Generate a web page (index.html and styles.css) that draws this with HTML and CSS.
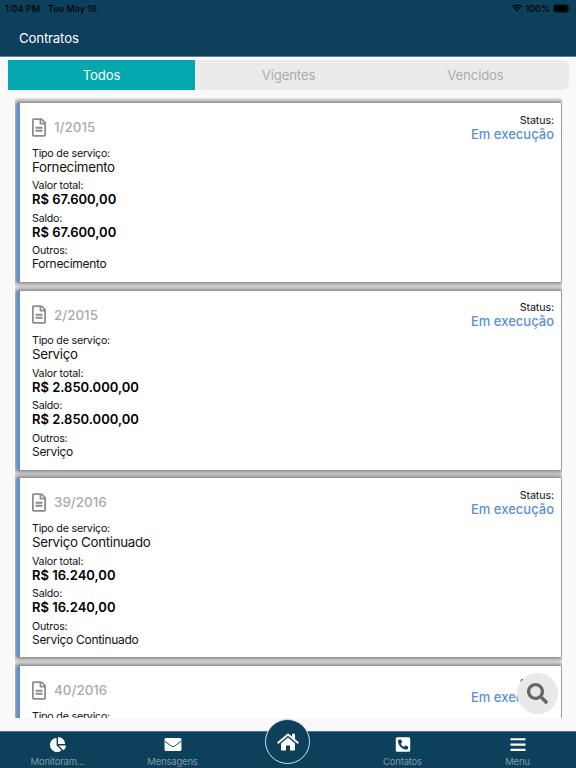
FILE: index.html
```html
<!DOCTYPE html>
<html lang="pt-BR">
<head>
    <meta charset="UTF-8">
    <meta name="viewport" content="width=device-width, initial-scale=1.0">
    <title>Contratos</title>
    <link rel="stylesheet" href="styles.css">
</head>
<body>
    <svg class="sprite" aria-hidden="true">
        <symbol id="icon-file" viewBox="0 0 384 512">
            <path d="M288 248v28c0 6.600-5.400 12-12 12H108c-6.600 0-12-5.400-12-12v-28c0-6.600 5.400-12 12-12h168c6.600 0 12 5.400 12 12zm-12 72H108c-6.600 0-12 5.400-12 12v28c0 6.600 5.400 12 12 12h168c6.600 0 12-5.400 12-12v-28c0-6.600-5.400-12-12-12zm108-188.100V464c0 26.500-21.500 48-48 48H48c-26.500 0-48-21.500-48-48V48C0 21.500 21.500 0 48 0h204.100C264.800 0 277 5.100 286 14.100L369.900 98c9 8.900 14.100 21.200 14.100 33.900zm-128-80V128h76.100L256 51.900zM336 464V176H232c-13.300 0-24-10.700-24-24V48H48v416h288z"/>
        </symbol>
    </svg>

    <header class="header">
        <div class="status-bar">
            <span class="time">1:04 PM</span>
            <span class="date">Tue May 18</span>
            <svg class="wifi" viewBox="0 0 20 15" fill="none" stroke="#000" stroke-width="2.500">
                <path d="M1 5.500a13 13 0 0 1 18 0M4.300 9a8.200 8.200 0 0 1 11.400 0"/>
                <path d="M10 14.500l-3.200-3.300a4.600 4.600 0 0 1 6.400 0z" fill="#000" stroke="none"/>
            </svg>
            <span class="percent">100%</span>
            <svg class="battery" viewBox="0 0 20 10">
                <rect x=".5" y=".5" width="17" height="9" rx="2.500" fill="none" stroke="#06202e"/>
                <rect x="1.300" y="1.300" width="15.400" height="7.400" rx="1.500"/>
                <path d="M18.500 3.500c1.200.4 1.200 2.600 0 3z" fill="#06202e"/>
            </svg>
        </div>
        <h1>Contratos</h1>
    </header>

    <nav class="tabs">
        <a class="tab active">Todos</a>
        <a class="tab">Vigentes</a>
        <a class="tab">Vencidos</a>
    </nav>

    <main class="list">
        <article class="card">
            <div class="card-info">
                <h2><svg class="file"><use href="#icon-file"/></svg>1/2015</h2>
                <p class="label">Tipo de serviço:</p>
                <p class="value">Fornecimento</p>
                <p class="label">Valor total:</p>
                <p class="value money">R$ 67.600,00</p>
                <p class="label">Saldo:</p>
                <p class="value money">R$ 67.600,00</p>
                <p class="label">Outros:</p>
                <p class="value small">Fornecimento</p>
            </div>
            <div class="card-status">
                <p class="label">Status:</p>
                <p class="state">Em execução</p>
            </div>
        </article>

        <article class="card">
            <div class="card-info">
                <h2><svg class="file"><use href="#icon-file"/></svg>2/2015</h2>
                <p class="label">Tipo de serviço:</p>
                <p class="value">Serviço</p>
                <p class="label">Valor total:</p>
                <p class="value money">R$ 2.850.000,00</p>
                <p class="label">Saldo:</p>
                <p class="value money">R$ 2.850.000,00</p>
                <p class="label">Outros:</p>
                <p class="value small">Serviço</p>
            </div>
            <div class="card-status">
                <p class="label">Status:</p>
                <p class="state">Em execução</p>
            </div>
        </article>

        <article class="card">
            <div class="card-info">
                <h2><svg class="file"><use href="#icon-file"/></svg>39/2016</h2>
                <p class="label">Tipo de serviço:</p>
                <p class="value">Serviço Continuado</p>
                <p class="label">Valor total:</p>
                <p class="value money">R$ 16.240,00</p>
                <p class="label">Saldo:</p>
                <p class="value money">R$ 16.240,00</p>
                <p class="label">Outros:</p>
                <p class="value small">Serviço Continuado</p>
            </div>
            <div class="card-status">
                <p class="label">Status:</p>
                <p class="state">Em execução</p>
            </div>
        </article>

        <article class="card">
            <div class="card-info">
                <h2><svg class="file"><use href="#icon-file"/></svg>40/2016</h2>
                <p class="label">Tipo de serviço:</p>
            </div>
            <div class="card-status">
                <p class="label">Status:</p>
                <p class="state">Em execução</p>
            </div>
        </article>
    </main>

    <button class="search" aria-label="Buscar">
        <svg viewBox="0 0 512 512"><path d="M505 442.700L405.300 343c-4.500-4.500-10.600-7-17-7H372c27.600-35.300 44-79.700 44-128C416 93.100 322.900 0 208 0S0 93.100 0 208s93.100 208 208 208c48.300 0 92.700-16.400 128-44v16.300c0 6.400 2.500 12.500 7 17l99.700 99.700c9.400 9.400 24.600 9.400 33.900 0l28.300-28.300c9.400-9.400 9.400-24.600.1-34zM208 336c-70.700 0-128-57.200-128-128 0-70.700 57.200-128 128-128 70.700 0 128 57.200 128 128 0 70.700-57.200 128-128 128z"/></svg>
    </button>

    <footer class="bottom-nav">
        <a class="nav-item">
            <svg viewBox="0 0 544 512"><path d="M527.790 288H290.500l158.030 158.030c6.040 6.040 15.980 6.530 22.190.68 38.700-36.460 65.320-85.610 73.130-140.860 1.340-9.460-6.510-17.850-16.060-17.850zm-15.830-64.800C503.720 103.740 408.260 8.280 288.800.04 279.680-.59 272 7.100 272 16.240V240h223.770c9.140 0 16.820-7.680 16.190-16.800zM224 288V50.710c0-9.550-8.390-17.400-17.840-16.060C86.990 51.490-4.100 155.600.14 280.370 4.500 408.510 114.830 513.590 243.030 511.980c50.400-.63 96.970-16.870 135.260-44.030 7.900-5.600 8.420-17.230 1.570-24.080L224 288z"/></svg>
            <span>Monitoram...</span>
        </a>
        <a class="nav-item">
            <svg viewBox="0 0 18 16">
                <rect y="1" width="18" height="14" rx="1.500"/>
                <path d="M0 4.300l7.300 5.500q1.700 1.200 3.400 0L18 4.300" fill="none" stroke="#0c405b" stroke-width="1"/>
            </svg>
            <span>Mensagens</span>
        </a>
        <a class="nav-item home">
            <span class="home-circle">
                <svg viewBox="0 0 22 18">
                    <path d="M1.200 9.700L11 1.500l9.800 8.200" fill="none" stroke="#fff" stroke-width="2" stroke-linecap="round" stroke-linejoin="round"/>
                    <path d="M15 .8h3v6l-3-2.500zM11 4.600l7 5.900v6.200q0 .8-.8.800H13v-5H9v5H4.800q-.8 0-.8-.8v-6.200z"/>
                </svg>
            </span>
        </a>
        <a class="nav-item">
            <svg viewBox="0 0 16 16">
                <rect x=".3" y=".3" width="15.400" height="15.400" rx="1.600"/>
                <path d="M3.100 3.100l2.300-.6q.4-.1.600.3l1.100 2.500q.1.400-.2.700L5.500 7.100q1.200 2.400 3.500 3.500l1.200-1.400q.3-.3.600-.2l2.500 1.100q.4.200.3.600l-.6 2.300q-.1.400-.6.400C7 13.400 2.600 9 2.600 3.600q0-.4.500-.5z" fill="#0c405b"/>
            </svg>
            <span>Contatos</span>
        </a>
        <a class="nav-item">
            <svg viewBox="0 0 16 16"><path d="M0 1.200h16v2.300H0zM0 6.900h16v2.300H0zM0 12.600h16v2.300H0z"/></svg>
            <span>Menu</span>
        </a>
    </footer>
</body>
</html>
```

FILE: styles.css
```css
* {
    box-sizing: border-box;
}

body {
    font-family: Inter, Roboto, sans-serif;
    background-color: #f9f9f9;
    color: #111111;
    margin: 0;
    height: 768px;
    display: flex;
    flex-direction: column;
    overflow: hidden;
    position: relative;
}

h1, h2, p {
    margin: 0;
    font-weight: 400;
}

.sprite {
    position: absolute;
    width: 0;
    height: 0;
}

.header {
    flex: none;
    height: 57px;
    background-color: #0c405b;
    border-bottom: 1px solid #5f8298;
}

.status-bar {
    height: 16px;
    padding: 0 5px;
    display: flex;
    align-items: center;
    font-size: 9.1px;
    font-weight: 500;
    color: #000000;
}

.date {
    margin-left: 8px;
}

.wifi {
    width: 10px;
    height: 8px;
    margin-left: auto;
}

.percent {
    margin: 0 3px;
}

.battery {
    width: 18px;
    height: 9px;
}

.header h1 {
    padding: 13px 19px 0;
    font-size: 13.2px;
    letter-spacing: -0.15px;
    line-height: 18px;
    color: #ffffff;
}

.tabs {
    flex: none;
    display: flex;
    height: 30px;
    margin: 3px 7px 0 8px;
    background-color: #ebebeb;
    border-radius: 0 7px 7px 0;
}

.tab {
    flex: 1;
    line-height: 31px;
    font-size: 13.2px;
    letter-spacing: -0.15px;
    text-align: center;
    color: #adadad;
}

.tab.active {
    background-color: #04a7ad;
    color: #ffffff;
}

.list {
    flex: none;
    height: 620px;
    margin: 8px 14px 0 15px;
    padding: 5px 0 0 2px;
    overflow: hidden;
}

.card {
    height: 179px;
    margin-bottom: 8.67px;
    margin-right: 1px;
    padding: 9.6px 7px 0 12px;
    display: flex;
    justify-content: space-between;
    background-color: #ffffff;
    border-left: 3px solid #5b8fd9;
    box-shadow: 0 0 5px 2px rgba(0, 0, 0, 0.55);
}

.card h2 {
    display: flex;
    align-items: center;
    height: 29px;
    margin-bottom: 4px;
    font-size: 13.4px;
    font-weight: 500;
    color: #aaaaaa;
}

.file {
    width: 14px;
    height: 19px;
    margin-right: 8px;
    fill: #8c8c8c;
}

.label {
    font-size: 10.7px;
    letter-spacing: -0.22px;
    line-height: 15px;
}

.value {
    height: 17.6px;
    font-size: 13.3px;
    letter-spacing: -0.3px;
    line-height: 13px;
}

.money {
    font-size: 13px;
    letter-spacing: 0;
    font-weight: 600;
    color: #000000;
}

.small {
    font-size: 12px;
    letter-spacing: -0.3px;
    line-height: 12px;
}

.card-status {
    text-align: right;
}

.card-status .label {
    letter-spacing: -0.1px;
}

.state {
    font-size: 13px;
    font-weight: 500;
    line-height: 13px;
    color: #5b8fd9;
}

.search {
    position: absolute;
    right: 18px;
    bottom: 54px;
    width: 41px;
    height: 41px;
    padding: 0;
    display: flex;
    align-items: center;
    justify-content: center;
    border: none;
    border-radius: 50%;
    background-color: #e9e9e9;
}

.search svg {
    width: 21px;
    height: 21px;
    fill: #666666;
}

.bottom-nav {
    flex: none;
    display: flex;
    height: 37px;
    margin-top: auto;
    padding-right: 1px;
    background-color: #0c405b;
    border-top: 1px solid #52758a;
}

.nav-item {
    flex: 1;
    display: flex;
    flex-direction: column;
    align-items: center;
    padding-top: 5px;
    font-size: 9.5px;
    letter-spacing: -0.2px;
    line-height: 12px;
    color: #8199a7;
}

.nav-item svg {
    width: 18px;
    height: 16px;
    margin-bottom: 4px;
    fill: #ffffff;
}

.nav-item.home {
    padding: 0;
}

.home-circle {
    flex: none;
    width: 45px;
    height: 45px;
    margin-top: -13px;
    display: flex;
    align-items: center;
    justify-content: center;
    border: 1px solid #d5dfe5;
    border-radius: 50%;
    background-color: #0c405b;
}

.home .home-circle svg {
    width: 22px;
    height: 18px;
    margin: 0;
}
```
